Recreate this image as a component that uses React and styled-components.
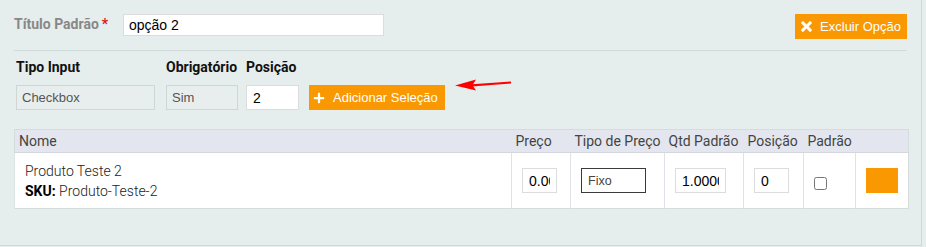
import React from 'react'
import styled, { createGlobalStyle } from 'styled-components'
import { FaPlus } from 'react-icons/fa'
import { ImCross } from 'react-icons/im'

const GlobalStyle = createGlobalStyle`
    html, body {
        margin: 0;
        padding: 0;
        background: #e6eeed;
    }
    * {
        box-sizing: border-box;
    }
`

const Panel = styled.div`
    width: 922px;
    padding: 14px 14px 36px 14px;
    border-right: 1px solid #cfd9d8;
    border-bottom: 1px solid #cfd9d8;
    font-family: Roboto, "Liberation Sans", sans-serif;
`

const TitleRow = styled.div`
    display: flex;
    align-items: flex-start;
    height: 25px;
`

const TitleLabel = styled.label`
    font-size: 14px;
    line-height: 20px;
    font-weight: 700;
    color: #888;
    width: 109px;

    span {
        color: #d62020;
        margin-left: 3px;
    }
`

const TextInput = styled.input`
    height: ${p => p.$h || 25}px;
    width: ${p => p.$w}px;
    border: 1px solid ${p => (p.$dark ? '#3a3a3a' : '#dcdcdc')};
    background: #fff;
    padding: 0 ${p => p.$pad || 5}px;
    font-family: "Liberation Sans", Arial, sans-serif;
    font-size: ${p => p.$fs || 14}px;
    color: ${p => p.$color || '#000'};
    outline: none;
    border-radius: 0;
    margin: 0;
`

const OrangeButton = styled.button`
    display: flex;
    align-items: center;
    height: 25px;
    padding: 0 ${p => p.$pr}px 0 ${p => p.$pl}px;
    margin-left: ${p => (p.$push ? 'auto' : '0')};
    background: #f99800;
    border: none;
    border-radius: 0;
    color: #fff;
    font-family: "Liberation Sans", Arial, sans-serif;
    font-size: 13px;
    cursor: pointer;

    svg {
        font-size: ${p => p.$icon}px;
        margin-right: ${p => p.$gap}px;
    }
`

const Divider = styled.hr`
    border: none;
    border-top: 1px solid #cfdcdb;
    margin: 11px 0 0 0;
    height: 0;
`

const FieldRow = styled.div`
    display: flex;
    align-items: flex-end;
    margin: 6px 0 0 2px;
`

const Field = styled.div`
    display: flex;
    flex-direction: column;
    width: ${p => p.$w}px;
    margin-right: ${p => p.$mr}px;
`

const FieldLabel = styled.div`
    font-size: 14px;
    line-height: 20px;
    font-weight: 700;
    color: #111;
    margin-bottom: 8px;
    white-space: nowrap;
`

const ReadOnlyBox = styled.div`
    height: 25px;
    border: 1px solid #cfd6d6;
    background: #e8eeee;
    padding-left: 5px;
    display: flex;
    align-items: center;
    font-family: "Liberation Sans", Arial, sans-serif;
    font-size: 13px;
    color: #555;
`

const Arrow = styled.svg`
    margin-left: 10px;
    align-self: center;
    margin-top: 2px;
`

const Table = styled.table`
    margin-top: 19px;
    width: 894px;
    border-collapse: collapse;
    border: 1px solid #d6dbde;
    table-layout: fixed;
    background: #fff;
`

const HeadCell = styled.th`
    width: ${p => p.$w}px;
    height: 23px;
    padding: 0 0 0 4px;
    background: #e3e6ee;
    border-bottom: 1px solid #d3d7dc;
    text-align: left;
    font-weight: 400;
    font-size: 14px;
    color: #444;
    white-space: nowrap;
`

const Cell = styled.td`
    height: 56px;
    padding: 0 0 0 ${p => p.$pl || 10}px;
    border-left: 1px solid #dfe2e6;
    vertical-align: middle;
    font-size: 14px;
    font-weight: 300;
    line-height: 20px;
    color: #222;

    b {
        font-weight: 700;
        color: #000;
    }
`

const Check = styled.input`
    display: block;
    margin: 5px 0 0 0;
    width: 13px;
    height: 13px;
`

const ColorSwatch = styled.div`
    width: 32px;
    height: 25px;
    background: #f99800;
`

const columns = [
    { label: 'Nome', w: 497 },
    { label: 'Preço', w: 59 },
    { label: 'Tipo de Preço', w: 94 },
    { label: 'Qtd Padrão', w: 79 },
    { label: 'Posição', w: 60 },
    { label: 'Padrão', w: 52 },
    { label: '', w: 53 },
]

const App = () => {
    return (
        <>
            <GlobalStyle />
            <Panel>
                <TitleRow>
                    <TitleLabel>Título Padrão<span>*</span></TitleLabel>
                    <TextInput $w={261} $h={22} defaultValue="opção 2" />
                    <OrangeButton $push $pl={6} $pr={6} $gap={8} $icon={11}>
                        <ImCross />Excluir Opção
                    </OrangeButton>
                </TitleRow>
                <Divider />
                <FieldRow>
                    <Field $w={139} $mr={11}>
                        <FieldLabel>Tipo Input</FieldLabel>
                        <ReadOnlyBox>Checkbox</ReadOnlyBox>
                    </Field>
                    <Field $w={72} $mr={8}>
                        <FieldLabel>Obrigatório</FieldLabel>
                        <ReadOnlyBox>Sim</ReadOnlyBox>
                    </Field>
                    <Field $w={53} $mr={10}>
                        <FieldLabel>Posição</FieldLabel>
                        <TextInput $w={53} $pad={6} defaultValue="2" />
                    </Field>
                    <OrangeButton $pl={4} $pr={7} $gap={8} $icon={12}>
                        <FaPlus />Adicionar Seleção
                    </OrangeButton>
                    <Arrow width="57" height="14" viewBox="0 0 57 14">
                        <path d="M17 6.2 L56 3.6 L56 5.6 L17 8.4 Z" fill="#f00" />
                        <path d="M0 7.4 L21 1.6 L17.5 7.2 L21 12.6 Z" fill="#f00" />
                    </Arrow>
                </FieldRow>
                <Table>
                    <thead>
                        <tr>
                            {columns.map((c, i) => (
                                <HeadCell key={i} $w={c.w}>{c.label}</HeadCell>
                            ))}
                        </tr>
                    </thead>
                    <tbody>
                        <tr>
                            <Cell $pl={10}>
                                Produto Teste 2<br />
                                <b>SKU:</b> Produto-Teste-2
                            </Cell>
                            <Cell>
                                <TextInput $w={35} $pad={6} defaultValue="0.00" />
                            </Cell>
                            <Cell>
                                <TextInput $w={65} $dark $pad={6} $fs={12.5} $color="#444" defaultValue="Fixo" />
                            </Cell>
                            <Cell>
                                <TextInput $w={51} $pad={6} defaultValue="1.0000" />
                            </Cell>
                            <Cell>
                                <TextInput $w={35} $pad={6} defaultValue="0" />
                            </Cell>
                            <Cell>
                                <Check type="checkbox" />
                            </Cell>
                            <Cell>
                                <ColorSwatch />
                            </Cell>
                        </tr>
                    </tbody>
                </Table>
            </Panel>
        </>
    )
}

export default App
